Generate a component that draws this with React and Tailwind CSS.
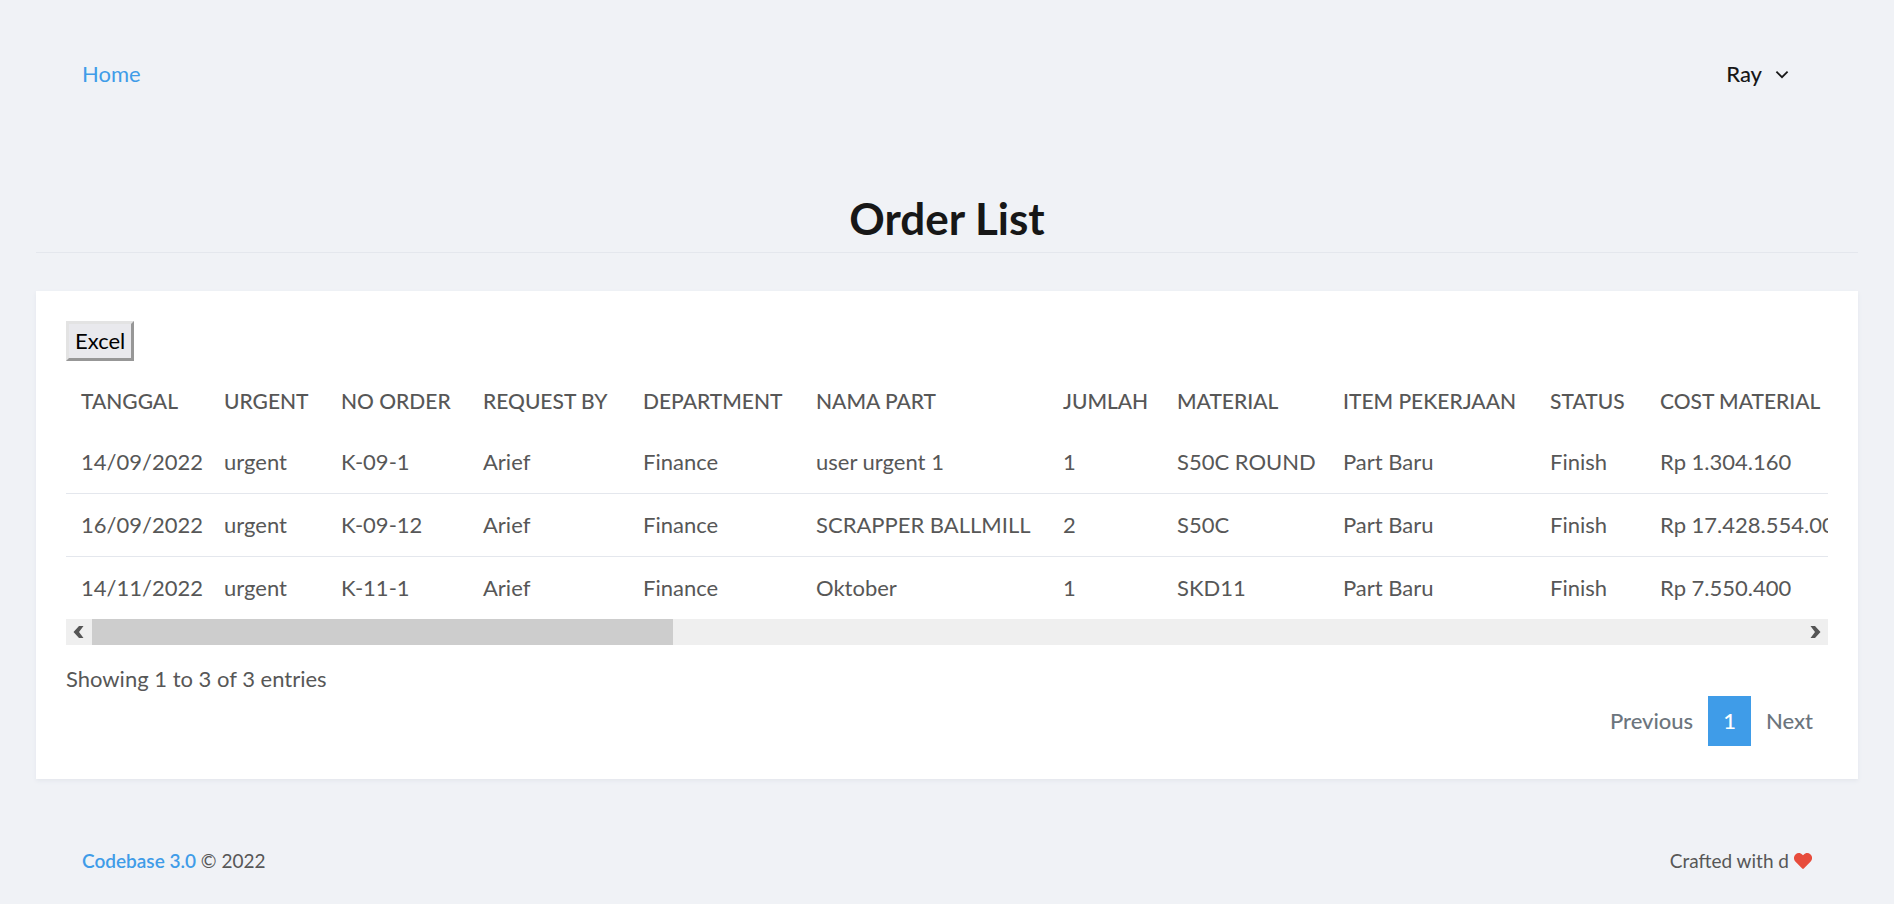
import React, { useRef } from 'react';

const columns = [
  { label: 'TANGGAL', width: 'w-[143px]' },
  { label: 'URGENT', width: 'w-[117px]' },
  { label: 'NO ORDER', width: 'w-[142px]' },
  { label: 'REQUEST BY', width: 'w-[160px]' },
  { label: 'DEPARTMENT', width: 'w-[173px]' },
  { label: 'NAMA PART', width: 'w-[247px]' },
  { label: 'JUMLAH', width: 'w-[114px]' },
  { label: 'MATERIAL', width: 'w-[166px]' },
  { label: 'ITEM PEKERJAAN', width: 'w-[207px]' },
  { label: 'STATUS', width: 'w-[110px]' },
  { label: 'COST MATERIAL', width: 'w-[212px]' },
];

const orders = [
  ['14/09/2022', 'urgent', 'K-09-1', 'Arief', 'Finance', 'user urgent 1', '1', 'S50C ROUND', 'Part Baru', 'Finish', 'Rp 1.304.160'],
  ['16/09/2022', 'urgent', 'K-09-12', 'Arief', 'Finance', 'SCRAPPER BALLMILL', '2', 'S50C', 'Part Baru', 'Finish', 'Rp 17.428.554.00'],
  ['14/11/2022', 'urgent', 'K-11-1', 'Arief', 'Finance', 'Oktober', '1', 'SKD11', 'Part Baru', 'Finish', 'Rp 7.550.400'],
];

function Header() {
  return (
    <header className="flex items-center justify-between pt-[58px] pr-[104px] pl-[82px]">
      <a href="#home" className="text-[#3f9ce8]">Home</a>
      <button type="button" className="flex items-center gap-3 font-medium text-[#171717]">
        Ray
        <svg className="h-4 w-4" viewBox="0 0 16 16" fill="none" stroke="currentColor" strokeWidth="1.8" aria-hidden="true">
          <path d="M2.400 5.600 8 11.200l5.600-5.600" />
        </svg>
      </button>
    </header>
  );
}

function OrderTable() {
  const scroller = useRef(null);
  const scroll = (left) => scroller.current.scrollBy({ left });

  return (
    <div className="mt-2">
      <div ref={scroller} className="overflow-x-auto [scrollbar-width:none]">
        <table className="w-[1791px] table-fixed text-left whitespace-nowrap">
          <thead className="text-[21px]">
            <tr>
              {columns.map((c) => (
                <th key={c.label} scope="col" className={`${c.width} px-[15px] pt-4 pb-[14px] font-medium`}>
                  {c.label}
                </th>
              ))}
            </tr>
          </thead>
          <tbody>
            {orders.map((row) => (
              <tr key={row[0]} className="border-b border-[#e4e7ed] last:border-b-0">
                {row.map((cell, i) => (
                  <td key={i} className="px-[15px] py-[15px]">{cell}</td>
                ))}
              </tr>
            ))}
          </tbody>
        </table>
      </div>
      <div className="flex h-[26px] bg-[#efefef] text-[#555]">
        <button type="button" aria-label="Scroll left" onClick={() => scroll(-200)} className="flex w-[26px] items-center justify-center">
          <svg className="h-4 w-4" viewBox="0 0 16 16" fill="currentColor" aria-hidden="true">
            <path d="M8 2h4.500L8 8l4.500 6H8L2.500 8z" />
          </svg>
        </button>
        <div className="flex-1">
          <div className="h-full w-[34%] bg-[#cdcdcd]" />
        </div>
        <button type="button" aria-label="Scroll right" onClick={() => scroll(200)} className="flex w-[26px] items-center justify-center">
          <svg className="h-4 w-4" viewBox="0 0 16 16" fill="currentColor" aria-hidden="true">
            <path d="M8 2H3.500L8 8l-4.500 6H8l5.500-6z" />
          </svg>
        </button>
      </div>
    </div>
  );
}

export default function App() {
  return (
    <div className="min-h-screen bg-[#f0f2f6] font-['Lato',sans-serif] text-[22px] leading-8 text-[#575757]">
      <Header />
      <main className="px-9">
        <h1 className="mt-[98px] border-b border-[#e4e7ed] pb-1 text-center text-[44px] leading-[60px] font-bold text-[#171717]">
          Order List
        </h1>
        <section className="mt-[38px] bg-white px-[30px] pt-[30px] pb-[33px] shadow-[0_2px_4px_#e4e7ed]">
          <button type="button" className="block h-10 border-[3px] border-t-[#e3e3e3] border-r-[#979797] border-b-[#979797] border-l-[#e3e3e3] bg-[#e9e9ed] px-[6px] text-black">
            Excel
          </button>
          <OrderTable />
          <p className="pt-[18px]">Showing 1 to 3 of 3 entries</p>
          <nav aria-label="Pagination" className="mt-px flex justify-end font-medium text-[#6c757d]">
            <a href="#previous" className="px-[15px] py-[9px]">Previous</a>
            <a href="#1" aria-current="page" className="bg-[#3f9ce8] px-[15px] py-[9px] text-white">1</a>
            <a href="#next" className="px-[15px] py-[9px]">Next</a>
          </nav>
        </section>
      </main>
      <footer className="flex items-center justify-between px-[82px] pt-[66px] pb-6 text-[19px]">
        <p>
          <a href="#codebase" className="font-semibold text-[#3f9ce8]">Codebase 3.0</a> © 2022
        </p>
        <p className="flex items-center gap-[5px]">
          Crafted with d
          <svg className="h-[18px] w-[18px]" viewBox="0 0 18 16" fill="#e74c3c" aria-label="love">
            <path d="M16.300 1.200C14.300-.5 11.400-.200 9.600 1.700L9 2.300l-.6-.6C6.600-.200 3.700-.500 1.700 1.200c-2.200 1.900-2.300 5.200-.4 7.200L8.200 15.500c.5.500 1.200.5 1.600 0l6.900-7.100c2-2 1.900-5.300-.4-7.200z" />
          </svg>
        </p>
      </footer>
    </div>
  );
}
